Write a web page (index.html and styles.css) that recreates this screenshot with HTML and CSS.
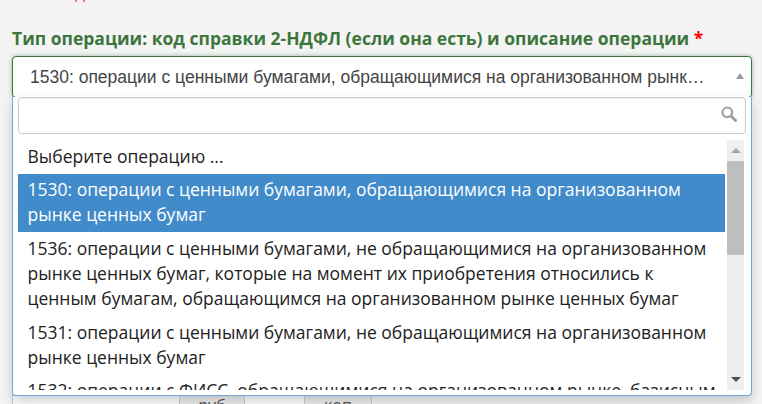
FILE: index.html
```html
<!DOCTYPE html>
<html lang="ru">
<head>
<meta charset="utf-8">
<title>Тип операции</title>
<link rel="stylesheet" href="styles.css">
</head>
<body>
<div class="page">
  <div class="error-clip"><span class="error-text">д</span></div>
  <label class="field-label">Тип операции: код справки 2-НДФЛ (если она есть) и описание операции <span class="req">*</span></label>
  <div class="select">
    <span class="select-value">1530: операции с ценными бумагами, обращающимися на организованном рынке ценных бумаг</span>
    <span class="select-arrow"></span>
  </div>
  <div class="behind-row">
    <div class="cell cell-a"></div>
    <div class="cell cell-addon">руб</div>
    <div class="cell cell-b"></div>
    <div class="cell cell-addon cell-addon-wide">коп</div>
  </div>
  <div class="dropdown">
    <div class="search">
      <svg class="search-icon" viewBox="0 0 16 16" width="16" height="16"><circle cx="6.3" cy="6.3" r="4.8" fill="none" stroke="#a0a0a0" stroke-width="2.2"/><path d="M10 10 L14.4 14.4" stroke="#a0a0a0" stroke-width="3" stroke-linecap="round"/></svg>
    </div>
    <div class="list-wrap">
      <ul class="list">
        <li class="opt">Выберите операцию ...</li>
        <li class="opt opt-active">1530: операции с ценными бумагами, обращающимися на организованном рынке ценных бумаг</li>
        <li class="opt">1536: операции с ценными бумагами, не обращающимися на организованном рынке ценных бумаг, которые на момент их приобретения относились к ценным бумагам, обращающимся на организованном рынке ценных бумаг</li>
        <li class="opt">1531: операции с ценными бумагами, не обращающимися на организованном рынке ценных бумаг</li>
        <li class="opt">1532: операции с ФИСС, обращающимися на организованном рынке, базисным активом которых являются ценные бумаги</li>
      </ul>
      <div class="scrollbar">
        <span class="sb-btn"><span class="tri tri-up"></span></span>
        <span class="sb-track"><span class="sb-thumb"></span></span>
        <span class="sb-btn"><span class="tri tri-down"></span></span>
      </div>
    </div>
  </div>
</div>
</body>
</html>
```
FILE: styles.css
```css
html, body { margin: 0; padding: 0; }
body { background: #f4f4f4; font-family: "Open Sans", sans-serif; color: #333; }
.page { position: relative; width: 762px; height: 404px; overflow: hidden; padding: 0 10px 0 12px; box-sizing: border-box; }
.error-clip { height: 2px; overflow: hidden; padding-left: 63px; }
.error-text { display: block; font-size: 17.5px; line-height: 14px; color: #d9534f; margin-top: -14px; }
.field-label { display: block; margin-top: 24px; font-size: 17.5px; line-height: 24px; font-weight: 700; color: #3c763d; white-space: nowrap; }
.req { color: #f00; }
.select { display: flex; align-items: center; box-sizing: border-box; height: 42px; margin-top: 6px; padding: 0 7px 0 17px; background: #fff; border: 1px solid #3c763d; border-radius: 4px; box-shadow: 0 0 4px rgba(60,118,61,.5); font-family: "Liberation Sans", sans-serif; font-size: 17.5px; color: #444; }
.select-value { flex: 1; white-space: nowrap; overflow: hidden; text-overflow: ellipsis; margin-right: 31px; }
.select-arrow { width: 0; height: 0; margin-top: -2px; border-left: 4px solid transparent; border-right: 4px solid transparent; border-bottom: 6px solid #999; }
.behind-row { display: flex; height: 40px; margin-top: 297px; border-left: 1px solid #ccc; font-size: 16px; color: #555; }
.cell { box-sizing: border-box; height: 40px; border-top: 1px solid #ccc; }
.cell-a { width: 166px; background: #fff; }
.cell-addon { width: 66px; text-align: center; background: #eee; border: 1px solid #ccc; line-height: 14px; padding-top: 2px; }
.cell-addon-wide { width: 68px; }
.cell-b { width: 59px; background: #fff; }
.dropdown { position: absolute; left: 12px; top: 97px; width: 740px; height: 299px; box-sizing: border-box; background: #fff; border: 1px solid #6fa8dc; border-top: 0; border-radius: 0 0 4px 4px; padding: 0 5px 5px; box-shadow: 0 6px 12px rgba(0,0,0,.175); display: flex; flex-direction: column; }
.search { position: relative; box-sizing: border-box; height: 37px; flex: none; background: #fff; border: 1px solid #ccc; border-radius: 4px; box-shadow: inset 0 1px 1px rgba(0,0,0,.075); }
.search-icon { position: absolute; right: 8px; top: 8px; }
.list-wrap { display: flex; flex: 1; min-height: 0; margin: 6px 2px 0 0; overflow: hidden; }
.list { flex: 1; margin: 0; padding: 0; list-style: none; overflow: hidden; }
.opt { padding: 3.9px 8px 4.7px 9.5px; font-size: 17.5px; line-height: 25px; color: #222; }
.opt-active { background: #428bca; color: #fff; }
.scrollbar { flex: none; width: 17px; margin-left: 2px; display: flex; flex-direction: column; background: #efefef; }
.sb-btn { flex: none; height: 21px; display: flex; align-items: center; justify-content: center; }
.sb-track { flex: 1; }
.sb-thumb { display: block; height: 94px; background: #bebebe; }
.tri { width: 0; height: 0; border-left: 5px solid transparent; border-right: 5px solid transparent; }
.tri-up { border-bottom: 5px solid #a3a3a3; }
.tri-down { border-top: 5px solid #505050; }
```
